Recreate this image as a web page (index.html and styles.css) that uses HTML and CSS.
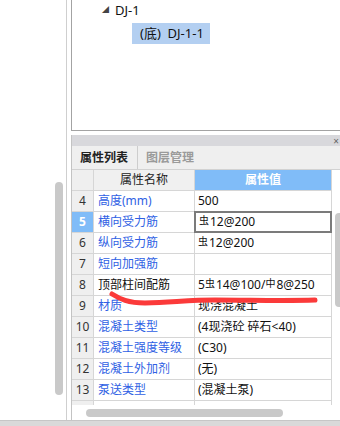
FILE: index.html
```html
<!DOCTYPE html>
<html lang="zh-CN">
<head>
    <meta charset="UTF-8">
    <title>属性列表</title>
    <link rel="stylesheet" href="styles.css">
</head>
<body>
    <div class="workspace">
        <div class="side-strip">
            <div class="side-thumb"></div>
        </div>
        <div class="main-panel">
            <div class="tree">
                <div class="tree-node">
                    <span class="tree-arrow">◢</span>
                    <span>DJ-1</span>
                </div>
                <div class="tree-leaf selected">(底)&nbsp; DJ-1-1</div>
            </div>
            <div class="dock">
                <div class="dock-title"><span class="dock-close">×</span></div>
                <div class="tabs">
                    <div class="tab active">属性列表</div>
                    <div class="tab">图层管理</div>
                </div>
                <div class="grid-area">
                    <div class="prop-grid">
                        <div class="row head">
                            <div class="cell num"></div>
                            <div class="cell name">属性名称</div>
                            <div class="cell value">属性值</div>
                        </div>
                        <div class="row">
                            <div class="cell num">4</div>
                            <div class="cell name link">高度(mm)</div>
                            <div class="cell value">500</div>
                        </div>
                        <div class="row current">
                            <div class="cell num">5</div>
                            <div class="cell name link">横向受力筋</div>
                            <div class="cell value"><span class="steel">虫</span>12@200</div>
                        </div>
                        <div class="row">
                            <div class="cell num">6</div>
                            <div class="cell name link">纵向受力筋</div>
                            <div class="cell value"><span class="steel">虫</span>12@200</div>
                        </div>
                        <div class="row">
                            <div class="cell num">7</div>
                            <div class="cell name link">短向加强筋</div>
                            <div class="cell value"></div>
                        </div>
                        <div class="row">
                            <div class="cell num">8</div>
                            <div class="cell name">顶部柱间配筋</div>
                            <div class="cell value">5<span class="steel">虫</span>14@100/<span class="steel">中</span>8@250</div>
                        </div>
                        <div class="row">
                            <div class="cell num">9</div>
                            <div class="cell name link">材质</div>
                            <div class="cell value">现浇混凝土</div>
                        </div>
                        <div class="row">
                            <div class="cell num">10</div>
                            <div class="cell name link">混凝土类型</div>
                            <div class="cell value">(4现浇砼 碎石&lt;40)</div>
                        </div>
                        <div class="row">
                            <div class="cell num">11</div>
                            <div class="cell name link">混凝土强度等级</div>
                            <div class="cell value">(C30)</div>
                        </div>
                        <div class="row">
                            <div class="cell num">12</div>
                            <div class="cell name link">混凝土外加剂</div>
                            <div class="cell value">(无)</div>
                        </div>
                        <div class="row">
                            <div class="cell num">13</div>
                            <div class="cell name link">泵送类型</div>
                            <div class="cell value">(混凝土泵)</div>
                        </div>
                        <!-- next row is scrolled out of view, only its top shows -->
                        <div class="row">
                            <div class="cell num"></div>
                            <div class="cell name"></div>
                            <div class="cell value"></div>
                        </div>
                    </div>
                    <div class="v-track">
                        <div class="v-thumb"></div>
                    </div>
                </div>
                <div class="h-track">
                    <div class="h-thumb"></div>
                </div>
            </div>
        </div>
    </div>
    <div class="status-bar"></div>

    <!-- red pen mark drawn over the table -->
    <svg class="pen-mark" width="340" height="426" viewBox="0 0 340 426">
        <path d="M112 294 C 120 299, 128 303, 145 303 C 175 302, 190 300, 215 300 C 250 300, 285 301, 315 300"
              fill="none" stroke="#fb3a3a" stroke-width="5" stroke-linecap="round"/>
    </svg>
</body>
</html>
```

FILE: styles.css
```css
body {
    margin: 0;
    width: 340px;
    height: 426px;
    overflow: hidden;
    font-family: "Noto Sans", "Noto Sans CJK SC", sans-serif;
    font-size: 12px;
    color: #111;
    background-color: #fff;
    position: relative;
}
.workspace {
    display: flex;
    height: 420px;
}
.side-strip {
    width: 66px;
    flex-shrink: 0;
    border-right: 1px solid #cfcfcf;
    margin-right: 4px;
}
.side-thumb {
    width: 8px;
    height: 213px;
    margin-top: 182px;
    margin-left: 55px;
    border-radius: 4px;
    background-color: #c9c9c9;
}
.main-panel {
    flex: 1;
    display: flex;
    flex-direction: column;
    min-width: 0;
}
.tree {
    box-sizing: border-box;
    height: 131px;
    border-left: 1px solid #a3a3a3;
    border-bottom: 1px solid #a3a3a3;
    font-size: 13px;
    line-height: 18px;
}
.tree-node {
    display: flex;
    align-items: center;
    padding-left: 30px;
    padding-top: 1px;
    height: 18px;
}
.tree-arrow {
    font-size: 7px;
    color: #444;
    width: 13px;
}
.tree-leaf {
    display: inline-block;
    margin-left: 60px;
    margin-top: 4px;
    padding: 0 6px 0 8px;
    height: 21px;
    line-height: 21px;
}
.selected {
    background-color: #b3cff1;
}
.dock {
    flex: 1;
    margin-top: 4px;
    border-left: 1px solid #c3c3c3;
    display: flex;
    flex-direction: column;
}
.dock-title {
    height: 11px;
    background-color: #d8d8dc;
    display: flex;
    justify-content: flex-end;
    align-items: center;
}
.dock-close {
    font-size: 10px;
    line-height: 10px;
    color: #666;
    margin-right: 1px;
}
.tabs {
    height: 23px;
    background-color: #efefef;
    border-bottom: 1px solid #d2d2d2;
    display: flex;
}
.tab {
    padding: 0 8px;
    line-height: 23px;
    font-size: 12px;
    font-weight: bold;
    color: #9a9a9a;
}
.tab.active {
    color: #222;
    border-right: 1px solid #cdcdcd;
    padding-right: 9px;
}
.grid-area {
    display: flex;
    height: 235px;
    overflow: hidden;
}
.prop-grid {
    width: 260px;
    flex-shrink: 0;
}
.row {
    display: grid;
    grid-template-columns: 22px 101px 137px;
    height: 21px;
}
.cell {
    border-right: 1px solid #d6d6d6;
    border-bottom: 1px solid #d6d6d6;
    line-height: 20px;
    white-space: nowrap;
    overflow: hidden;
}
.cell.num {
    background-color: #efefef;
    text-align: center;
    color: #333;
}
.cell.name {
    padding-left: 4px;
}
.cell.value {
    padding-left: 3px;
}
.link {
    color: #2f5fe4;
}
.head .cell.name {
    background-color: #f0f0f0;
    text-align: center;
    padding-left: 0;
    color: #222;
}
.head .cell.value {
    background-color: #80bcf8;
    color: #fff;
    font-weight: bold;
    text-align: center;
    padding-left: 0;
}
.current .cell.num {
    background-color: #80bcf8;
    color: #fff;
    font-weight: bold;
}
.current .cell.value {
    border: 2px solid #7b7b7b;
    margin: -1px 0 0 -1px;
    line-height: 18px;
}
.steel {
    font-size: 10px;
    position: relative;
    top: -2px;
    margin-right: 1px;
}
.v-track {
    flex: 1;
}
.v-thumb {
    width: 8px;
    height: 94px;
    margin-top: 43px;
    margin-left: 3px;
    border-radius: 4px;
    background-color: #c9c9c9;
}
.h-track {
    height: 15px;
}
.h-thumb {
    width: 197px;
    height: 8px;
    margin-top: 4px;
    margin-left: 14px;
    border-radius: 4px;
    background-color: #c9c9c9;
}
.status-bar {
    height: 5px;
    border-top: 1px solid #c6c6c6;
    background-color: #d9d9d9;
}
.pen-mark {
    position: absolute;
    left: 0;
    top: 0;
    pointer-events: none;
}
```
